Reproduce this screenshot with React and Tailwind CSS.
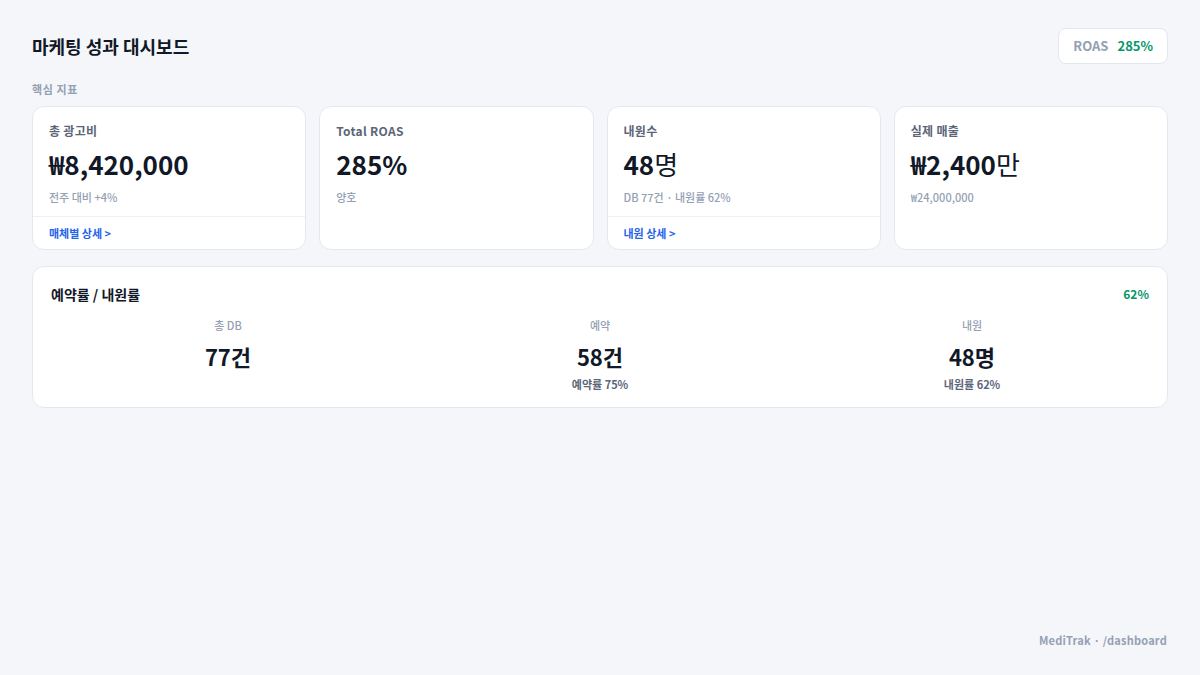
import React from 'react';

const kpis = [
  { label: '총 광고비', value: '₩8,420,000', unit: '', sub: '전주 대비 +4%', link: '매체별 상세 >' },
  { label: 'Total ROAS', value: '285%', unit: '', sub: '양호', link: null },
  { label: '내원수', value: '48', unit: '명', sub: 'DB 77건 · 내원률 62%', link: '내원 상세 >' },
  { label: '실제 매출', value: '₩2,400', unit: '만', sub: '₩24,000,000', link: null },
];

const funnel = [
  { label: '총 DB', value: '77건', sub: null },
  { label: '예약', value: '58건', sub: '예약률 75%' },
  { label: '내원', value: '48명', sub: '내원률 62%' },
];

function KpiCard({ item }) {
  return (
    <div className="bg-white border border-[#e3e8f0] rounded-xl flex flex-col h-[144px]">
      <div className="px-4 pt-[15px]">
        <p className="text-[12px] font-semibold text-[#5b6577] leading-[18px] tracking-[0.3px]">{item.label}</p>
        <p className="mt-[7px] text-[26px] font-semibold text-[#111827] leading-[34px]">
          {item.value}
          {item.unit && <span className="font-normal">{item.unit}</span>}
        </p>
        <p className="mt-[8px] text-[11px] font-medium text-[#94a0b4] leading-[16px]">{item.sub}</p>
      </div>
      {item.link && (
        <div className="mt-auto border-t border-[#edf0f5] px-4 h-[33px] flex items-center">
          <span className="text-[11px] font-semibold text-[#2563eb]">{item.link}</span>
        </div>
      )}
    </div>
  );
}

export default function App() {
  return (
    <div
      className="min-h-screen bg-[#f4f6fa] flex flex-col px-8 pt-7 pb-[27px]"
      style={{ fontFamily: '"Noto Sans CJK KR", "Noto Sans", sans-serif' }}
    >
      {/* Header */}
      <div className="flex items-center justify-between">
        <h1 className="text-[18px] font-bold text-[#111827] leading-[36px]">마케팅 성과 대시보드</h1>
        <div className="bg-white border border-[#e3e8f0] rounded-lg h-9 px-[14px] flex items-center gap-[9px] text-[13px] font-semibold">
          <span className="text-[#94a0b4]">ROAS</span>
          <span className="text-[#059669]">285%</span>
        </div>
      </div>

      <p className="mt-[15px] text-[11px] font-semibold text-[#94a0b4] leading-[20px] tracking-[0.6px]">핵심 지표</p>

      {/* KPI cards */}
      <div className="mt-[7px] grid grid-cols-4 gap-[13px]">
        {kpis.map((k) => (
          <KpiCard key={k.label} item={k} />
        ))}
      </div>

      {/* Funnel */}
      <div className="mt-[16px] bg-white border border-[#e3e8f0] rounded-xl px-[18px] pt-[17px] pb-[15px]">
        <div className="flex items-center justify-between">
          <h3 className="text-[14px] font-semibold text-[#111827] leading-[20px]">예약률 / 내원률</h3>
          <span className="text-[12px] font-semibold text-[#059669]">62%</span>
        </div>
        <div className="mt-[13px] -mx-[9px] grid grid-cols-3">
          {funnel.map((f) => (
            <div key={f.label} className="flex flex-col items-center">
              <p className="text-[11px] font-medium text-[#94a0b4] leading-[16px]">{f.label}</p>
              <p className="mt-[8px] text-[22px] font-bold text-[#111827] leading-[30px]">{f.value}</p>
              {f.sub ? (
                <p className="mt-[5px] text-[11px] font-semibold text-[#5b6577] leading-[16px]">{f.sub}</p>
              ) : (
                <div className="h-[21px]" />
              )}
            </div>
          ))}
        </div>
      </div>

      {/* Footer */}
      <div className="mt-auto flex justify-end pr-px">
        <span className="text-[11px] font-semibold text-[#94a0b4] tracking-[0.2px]">MediTrak · /dashboard</span>
      </div>
    </div>
  );
}
